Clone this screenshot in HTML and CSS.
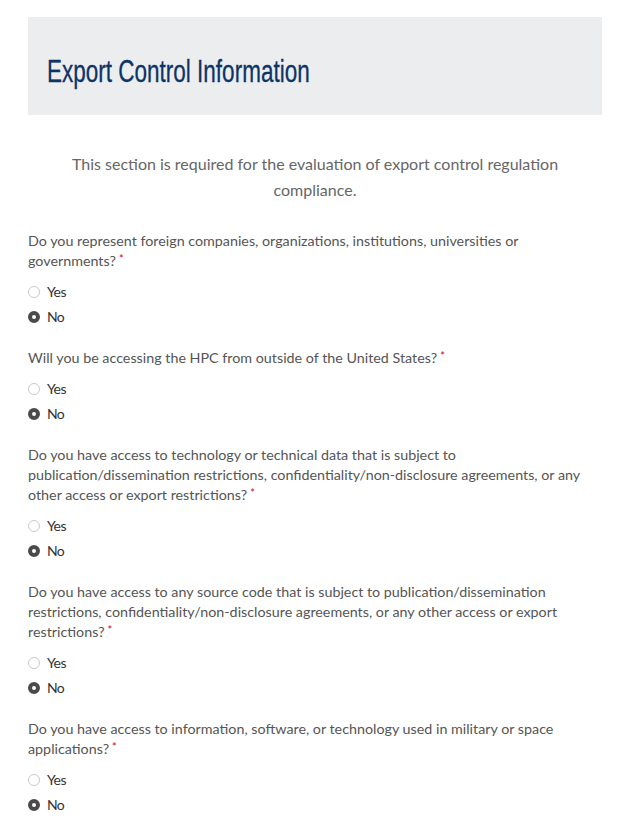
FILE: index.html
```html
<!DOCTYPE html>
<html lang="en">
<head>
<meta charset="utf-8">
<title>Export Control Information</title>
<link rel="stylesheet" href="styles.css">
</head>
<body>
<div class="page">
  <div class="header"><h1 class="title">Export Control Information</h1></div>
  <p class="intro">This section is required for the evaluation of export control regulation compliance.</p>

  <div class="question">
    <div class="label">Do you represent foreign companies, organizations, institutions, universities or governments?<span class="req">*</span></div>
    <div class="options">
      <label class="option"><span class="radio"></span><span class="opt-text">Yes</span></label>
      <label class="option"><span class="radio checked"></span><span class="opt-text">No</span></label>
    </div>
  </div>

  <div class="question">
    <div class="label">Will you be accessing the HPC from outside of the United States?<span class="req">*</span></div>
    <div class="options">
      <label class="option"><span class="radio"></span><span class="opt-text">Yes</span></label>
      <label class="option"><span class="radio checked"></span><span class="opt-text">No</span></label>
    </div>
  </div>

  <div class="question">
    <div class="label">Do you have access to technology or technical data that is subject to publication/dissemination restrictions, confidentiality/non-disclosure agreements, or any other access or export restrictions?<span class="req">*</span></div>
    <div class="options">
      <label class="option"><span class="radio"></span><span class="opt-text">Yes</span></label>
      <label class="option"><span class="radio checked"></span><span class="opt-text">No</span></label>
    </div>
  </div>

  <div class="question">
    <div class="label">Do you have access to any source code that is subject to publication/dissemination restrictions, confidentiality/non-disclosure agreements, or any other access or export restrictions?<span class="req">*</span></div>
    <div class="options">
      <label class="option"><span class="radio"></span><span class="opt-text">Yes</span></label>
      <label class="option"><span class="radio checked"></span><span class="opt-text">No</span></label>
    </div>
  </div>

  <div class="question">
    <div class="label">Do you have access to information, software, or technology used in military or space applications?<span class="req">*</span></div>
    <div class="options">
      <label class="option"><span class="radio"></span><span class="opt-text">Yes</span></label>
      <label class="option"><span class="radio checked"></span><span class="opt-text">No</span></label>
    </div>
  </div>
</div>
</body>
</html>
```
FILE: styles.css
```css
html, body {
  margin: 0;
  padding: 0;
  background: #ffffff;
}
body {
  font-family: Lato, "Open Sans", sans-serif;
}
.page {
  width: 574px;
  margin-left: 28px;
  padding-top: 17px;
}
.header {
  background: #ecedef;
  height: 98px;
  padding-left: 19px;
  display: flex;
  align-items: center;
}
.title {
  margin: 0;
  font-family: "Liberation Sans", Arial, sans-serif;
  font-weight: normal;
  font-size: 31px;
  color: #0d3466;
  display: inline-block;
  transform: scaleX(0.726);
  transform-origin: left center;
  white-space: nowrap;
  line-height: 1;
  padding-top: 10px;
  -webkit-text-stroke: 0.3px #0d3466;
}
.intro {
  margin: 36px 0 28px;
  text-align: center;
  font-size: 16px;
  line-height: 26px;
  color: #666666;
  padding: 0 40px;
}
.question {
  margin-bottom: 19px;
}
.label {
  font-size: 14.3px;
  line-height: 20px;
  color: #555555;
}
.req {
  display: inline-block;
  color: #d0021b;
  font-size: 11px;
  line-height: 10px;
  vertical-align: 3px;
  margin-left: 3px;
}
.options {
  margin-top: 8px;
  display: flex;
  flex-direction: column;
}
.option {
  display: flex;
  align-items: center;
  height: 25px;
}
.radio {
  width: 12px;
  height: 12px;
  box-sizing: border-box;
  border-radius: 50%;
  border: 1px solid #c9c9c9;
  background: #fff;
  margin-right: 7px;
  flex: none;
}
.radio.checked {
  border: 4px solid #4a4a4a;
}
.opt-text {
  font-size: 14px;
  color: #333333;
  letter-spacing: -0.6px;
}
```
